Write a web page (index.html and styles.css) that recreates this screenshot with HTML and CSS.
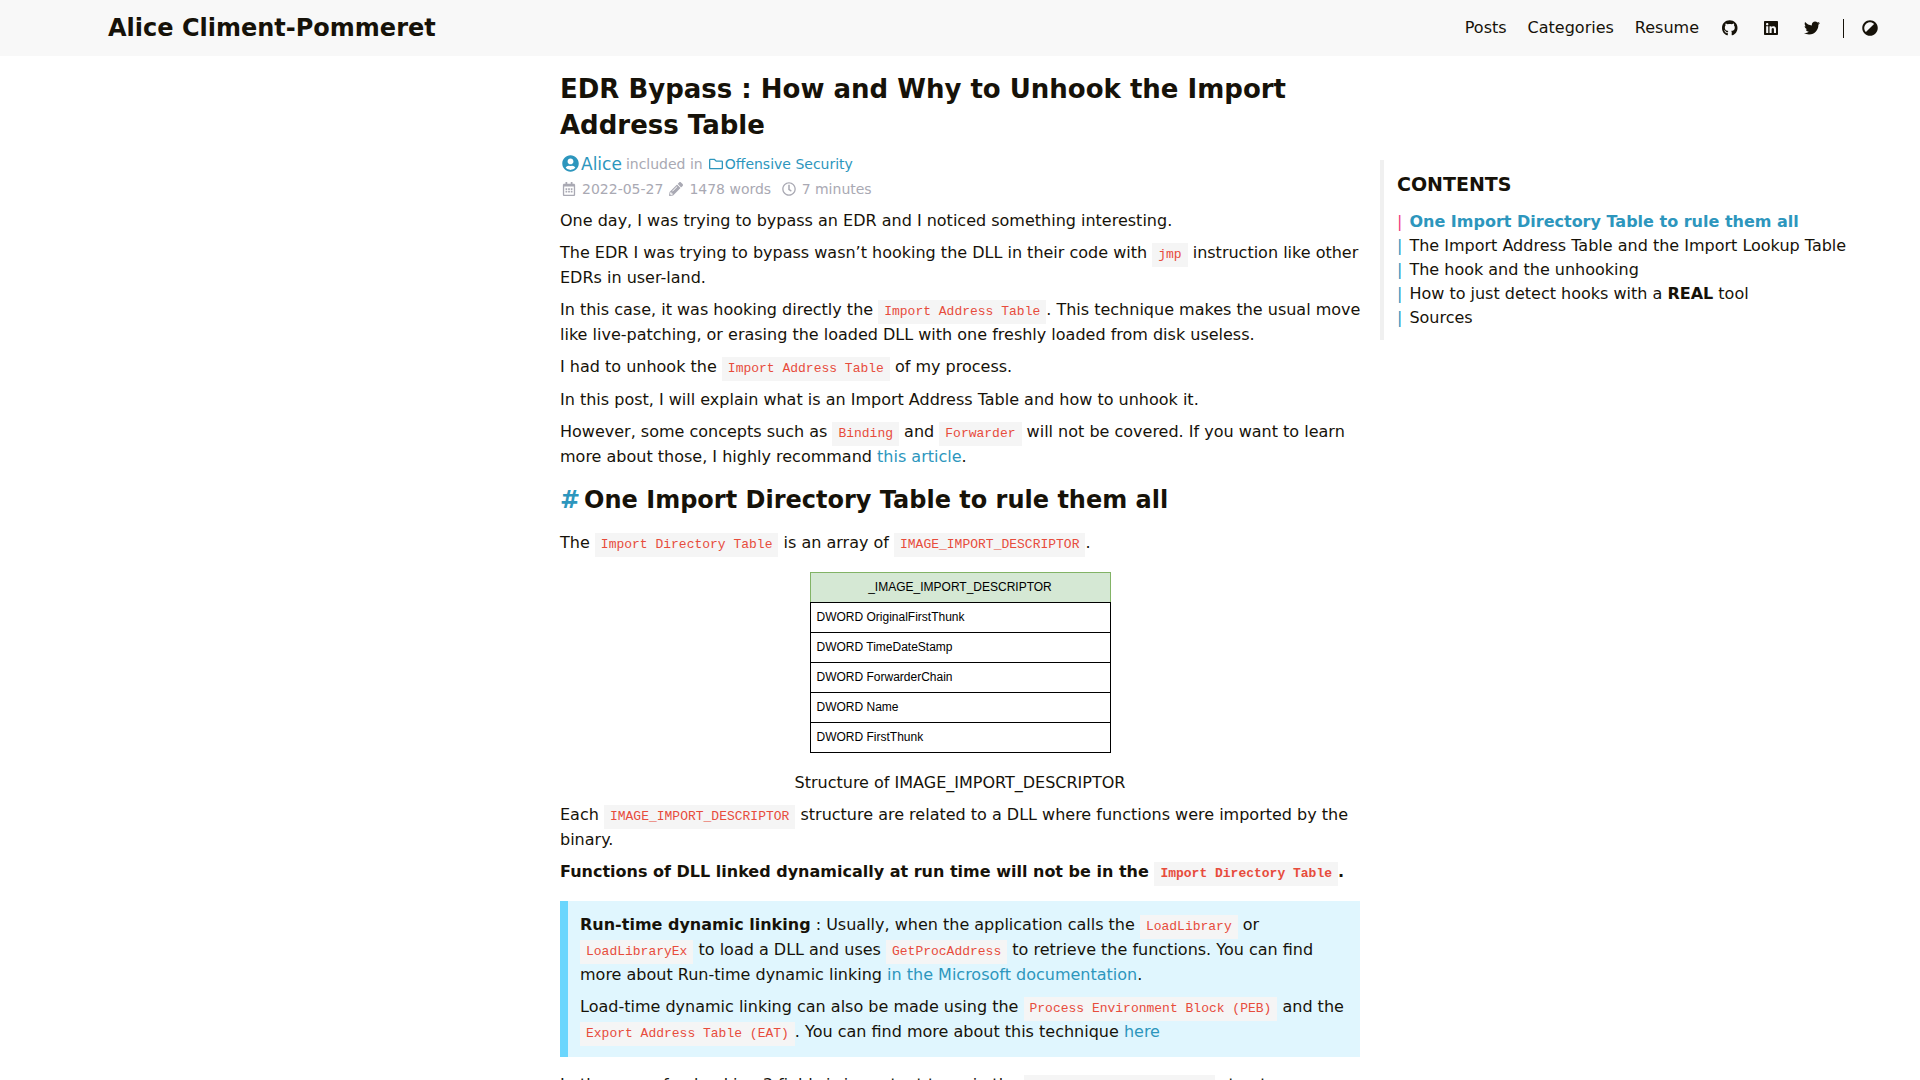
FILE: index.html
```html
<!DOCTYPE html>
<html lang="en">
<head>
<meta charset="utf-8">
<meta name="viewport" content="width=device-width, initial-scale=1">
<title>EDR Bypass : How and Why to Unhook the Import Address Table</title>
<link rel="stylesheet" href="styles.css">
</head>
<body>
<header class="site-header">
  <a class="site-title" href="#">Alice Climent-Pommeret</a>
  <nav class="menu">
    <a href="#">Posts</a>
    <a href="#">Categories</a>
    <a href="#">Resume</a>
    <a class="menu-icon" href="#" aria-label="GitHub"><svg class="icon" viewBox="0 0 496 512"><path d="M165.9 397.4c0 2-2.3 3.6-5.2 3.6-3.3.3-5.6-1.3-5.6-3.6 0-2 2.3-3.6 5.2-3.6 3-.3 5.6 1.3 5.6 3.6zm-31.1-4.5c-.7 2 1.3 4.3 4.3 4.9 2.6 1 5.6 0 6.2-2s-1.3-4.3-4.3-5.2c-2.6-.7-5.5.3-6.2 2.3zm44.2-1.7c-2.9.7-4.9 2.6-4.6 4.9.3 2 2.9 3.3 5.9 2.6 2.9-.7 4.9-2.6 4.6-4.6-.3-1.9-3-3.2-5.9-2.9zM244.8 8C106.1 8 0 113.3 0 252c0 110.9 69.8 205.8 169.5 239.2 12.8 2.3 17.3-5.6 17.3-12.1 0-6.2-.3-40.4-.3-61.4 0 0-70 15-84.7-29.8 0 0-11.4-29.1-27.8-36.6 0 0-22.9-15.7 1.6-15.4 0 0 24.9 2 38.6 25.8 21.9 38.6 58.6 27.5 72.9 20.9 2.3-16 8.8-27.1 16-33.7-55.9-6.2-112.3-14.3-112.3-110.5 0-27.5 7.6-41.3 23.6-58.9-2.6-6.5-11.1-33.3 2.6-67.9 20.9-6.5 69 27 69 27 20-5.6 41.5-8.5 62.8-8.5s42.8 2.9 62.8 8.5c0 0 48.1-33.6 69-27 13.7 34.7 5.2 61.4 2.6 67.9 16 17.7 25.8 31.5 25.8 58.9 0 96.5-58.9 104.2-114.8 110.5 9.2 7.9 17 22.9 17 46.4 0 33.7-.3 75.4-.3 83.6 0 6.5 4.6 14.4 17.3 12.1C428.2 457.8 496 362.9 496 252 496 113.3 383.5 8 244.8 8z"/></svg></a>
    <a class="menu-icon" href="#" aria-label="LinkedIn"><svg class="icon" viewBox="0 0 448 512"><path d="M416 32H31.9C14.3 32 0 46.5 0 64.3v383.4C0 465.5 14.3 480 31.9 480H416c17.6 0 32-14.5 32-32.3V64.3c0-17.8-14.4-32.3-32-32.3zM135.4 416H69V202.2h66.5V416zm-33.2-243c-21.3 0-38.5-17.3-38.5-38.5S80.9 96 102.2 96c21.2 0 38.5 17.3 38.5 38.5 0 21.3-17.2 38.5-38.5 38.5zm282.1 243h-66.4V312c0-24.8-.5-56.7-34.5-56.7-34.6 0-39.9 27-39.9 54.9V416h-66.4V202.2h63.7v29.2h.9c8.9-16.8 30.6-34.5 62.9-34.5 67.2 0 79.7 44.3 79.7 101.9V416z"/></svg></a>
    <a class="menu-icon" href="#" aria-label="Twitter"><svg class="icon" viewBox="0 0 512 512"><path d="M459.37 151.716c.325 4.548.325 9.097.325 13.645 0 138.72-105.583 298.558-298.558 298.558-59.452 0-114.68-17.219-161.137-47.106 8.447.974 16.568 1.299 25.34 1.299 49.055 0 94.213-16.568 130.274-44.832-46.132-.975-84.792-31.188-98.112-72.772 6.498.974 12.995 1.624 19.818 1.624 9.421 0 18.843-1.3 27.614-3.573-48.081-9.747-84.143-51.98-84.143-102.985v-1.299c13.969 7.797 30.214 12.67 47.431 13.319-28.264-18.843-46.781-51.005-46.781-87.391 0-19.492 5.197-37.36 14.294-52.954 51.655 63.675 129.3 105.258 216.365 109.807-1.624-7.797-2.599-15.918-2.599-24.04 0-57.828 46.782-104.934 104.934-104.934 30.213 0 57.502 12.67 76.67 33.137 23.715-4.548 46.456-13.32 66.599-25.34-7.798 24.366-24.366 44.833-46.132 57.827 21.117-2.273 41.584-8.122 60.426-16.243-14.292 20.791-32.161 39.308-52.628 54.253z"/></svg></a>
    <button class="theme-switch" type="button" aria-label="Switch theme"><svg class="icon" viewBox="0 0 512 512"><path transform="rotate(225 256 256)" d="M8 256c0 136.966 111.033 248 248 248s248-111.034 248-248S392.966 8 256 8 8 119.033 8 256zm248 184V72c101.705 0 184 82.311 184 184 0 101.69-82.311 184-184 184z"/></svg></button>
  </nav>
</header>

<div class="layout">
  <main class="post">
    <h1>EDR Bypass : How and Why to Unhook the Import Address Table</h1>
    <div class="meta">
      <div class="meta-line">
        <a class="author" href="#"><svg class="icon" viewBox="0 0 496 512"><path d="M248 8C111 8 0 119 0 256s111 248 248 248 248-111 248-248S385 8 248 8zm0 96c48.6 0 88 39.4 88 88s-39.4 88-88 88-88-39.4-88-88 39.4-88 88-88zm0 344c-58.7 0-111.3-26.6-146.5-68.2 18.8-35.4 55.6-59.8 98.5-59.8 2.4 0 4.8.4 7.1 1.1 13 4.2 26.6 6.9 40.9 6.9 14.3 0 28-2.7 40.9-6.9 2.3-.7 4.7-1.1 7.1-1.1 42.9 0 79.7 24.4 98.5 59.8C359.3 421.4 306.7 448 248 448z"/></svg>Alice</a>
        <span>included in</span>
        <a class="category" href="#"><svg class="icon" viewBox="0 0 512 512"><path d="M464 128H272l-54.63-54.63c-6-6-14.14-9.37-22.63-9.37H48C21.49 64 0 85.49 0 112v288c0 26.51 21.49 48 48 48h416c26.51 0 48-21.49 48-48V176c0-26.51-21.49-48-48-48zm0 272H48V112h140.12l54.63 54.63c6 6 14.14 9.37 22.63 9.37H464v224z"/></svg>Offensive Security</a>
      </div>
      <div class="meta-line">
        <span class="stat"><svg class="icon" viewBox="0 0 448 512"><path d="M148 288h-40c-6.6 0-12-5.4-12-12v-40c0-6.6 5.4-12 12-12h40c6.6 0 12 5.4 12 12v40c0 6.6-5.4 12-12 12zm108-12v-40c0-6.6-5.4-12-12-12h-40c-6.6 0-12 5.4-12 12v40c0 6.6 5.4 12 12 12h40c6.6 0 12-5.4 12-12zm96 0v-40c0-6.6-5.4-12-12-12h-40c-6.6 0-12 5.4-12 12v40c0 6.6 5.4 12 12 12h40c6.6 0 12-5.4 12-12zm-96 96v-40c0-6.6-5.4-12-12-12h-40c-6.6 0-12 5.4-12 12v40c0 6.6 5.4 12 12 12h40c6.6 0 12-5.4 12-12zm-96 0v-40c0-6.6-5.4-12-12-12h-40c-6.6 0-12 5.4-12 12v40c0 6.6 5.4 12 12 12h40c6.6 0 12-5.4 12-12zm192 0v-40c0-6.6-5.4-12-12-12h-40c-6.6 0-12 5.4-12 12v40c0 6.6 5.4 12 12 12h40c6.6 0 12-5.4 12-12zm96-260v352c0 26.5-21.5 48-48 48H48c-26.5 0-48-21.5-48-48V112c0-26.5 21.5-48 48-48h48V12c0-6.6 5.4-12 12-12h40c6.6 0 12 5.4 12 12v52h128V12c0-6.6 5.4-12 12-12h40c6.6 0 12 5.4 12 12v52h48c26.5 0 48 21.5 48 48zm-48 346V160H48v298c0 3.3 2.7 6 6 6h340c3.3 0 6-2.7 6-6z"/></svg><time datetime="2022-05-27">2022-05-27</time></span>
        <span class="stat"><svg class="icon" viewBox="0 0 512 512"><path d="M497.9 142.1l-46.1 46.1c-4.7 4.7-12.3 4.7-17 0l-111-111c-4.7-4.7-4.7-12.3 0-17l46.1-46.1c18.7-18.7 49.1-18.7 67.9 0l60.1 60.1c18.8 18.7 18.8 49.1 0 67.9zM284.2 99.8L21.6 362.4.4 483.9c-2.9 16.4 11.4 30.6 27.8 27.8l121.5-21.3 262.6-262.6c4.7-4.7 4.7-12.3 0-17l-111-111c-4.8-4.7-12.4-4.7-17.1 0zM124.1 339.9c-5.5-5.5-5.5-14.3 0-19.8l154-154c5.5-5.5 14.3-5.5 19.8 0s5.5 14.3 0 19.8l-154 154c-5.5 5.5-14.3 5.5-19.8 0zM88 424h48v36.3l-64.5 11.3-31.1-31.1L51.7 376H88v48z"/></svg>1478 words</span>
        <span class="stat">&nbsp;<svg class="icon" viewBox="0 0 512 512"><path d="M256 8C119 8 8 119 8 256s111 248 248 248 248-111 248-248S393 8 256 8zm0 448c-110.5 0-200-89.5-200-200S145.5 56 256 56s200 89.5 200 200-89.5 200-200 200zm61.8-104.4l-84.9-61.7c-3.1-2.3-4.9-5.9-4.9-9.7V116c0-6.6 5.4-12 12-12h32c6.6 0 12 5.4 12 12v141.7l66.8 48.6c5.4 3.9 6.5 11.4 2.6 16.8L334.6 349c-3.9 5.3-11.4 6.5-16.8 2.6z"/></svg>7 minutes</span>
      </div>
    </div>

    <p>One day, I was trying to bypass an EDR and I noticed something interesting.</p>
    <p>The EDR I was trying to bypass wasn’t hooking the DLL in their code with <code>jmp</code> instruction like other EDRs in user-land.</p>
    <p><span class="keep-line">In this case, it was hooking directly the <code>Import Address Table</code>. This technique makes the usual move</span> like live-patching, or erasing the loaded DLL with one freshly loaded from disk useless.</p>
    <p>I had to unhook the <code>Import Address Table</code> of my process.</p>
    <p>In this post, I will explain what is an Import Address Table and how to unhook it.</p>
    <p>However, some concepts such as <code>Binding</code> and <code>Forwarder</code> will not be covered. If you want to learn more about those, I highly recommand <a href="#">this article</a>.</p>

    <h2 id="one-import-directory-table"><a href="#one-import-directory-table">#</a>One Import Directory Table to rule them all</h2>
    <p>The <code>Import Directory Table</code> is an array of <code>IMAGE_IMPORT_DESCRIPTOR</code>.</p>

    <figure>
      <table class="struct">
        <thead><tr><th>_IMAGE_IMPORT_DESCRIPTOR</th></tr></thead>
        <tbody>
          <tr><td>DWORD OriginalFirstThunk</td></tr>
          <tr><td>DWORD TimeDateStamp</td></tr>
          <tr><td>DWORD ForwarderChain</td></tr>
          <tr><td>DWORD Name</td></tr>
          <tr><td>DWORD FirstThunk</td></tr>
        </tbody>
      </table>
      <figcaption>Structure of IMAGE_IMPORT_DESCRIPTOR</figcaption>
    </figure>

    <p>Each <code>IMAGE_IMPORT_DESCRIPTOR</code> structure are related to a DLL where functions were imported by the binary.</p>
    <p><strong>Functions of DLL linked dynamically at run time will not be in the <code>Import Directory Table</code>.</strong></p>

    <blockquote>
      <p><strong>Run-time dynamic linking</strong> : Usually, when the application calls the <code>LoadLibrary</code> or <code>LoadLibraryEx</code> to load a DLL and uses <code>GetProcAddress</code> to retrieve the functions. You can find more about Run-time dynamic linking <a href="#">in the Microsoft documentation</a>.</p>
      <p>Load-time dynamic linking can also be made using the <code>Process Environment Block (PEB)</code> and the <code>Export Address Table (EAT)</code>. You can find more about this technique <a href="#">here</a></p>
    </blockquote>

    <p>In the case of unhooking 3 fields is important to us in the <code>IMAGE_IMPORT_DESCRIPTOR</code> structure:</p>
  </main>

  <aside class="toc">
    <h2>CONTENTS</h2>
    <ul>
      <li class="active"><a href="#">One Import Directory Table to rule them all</a></li>
      <li><a href="#">The Import Address Table and the Import Lookup Table</a></li>
      <li><a href="#">The hook and the unhooking</a></li>
      <li><a href="#">How to just detect hooks with a <strong>REAL</strong> tool</a></li>
      <li><a href="#">Sources</a></li>
    </ul>
  </aside>
</div>
</body>
</html>
```
FILE: styles.css
```css
* { box-sizing: border-box; }

html, body { height: 100%; }

body {
  margin: 0;
  overflow: hidden;
  display: flex;
  flex-direction: column;
  font: 16px/24px "DejaVu Sans", sans-serif;
  color: #161209;
  background: #fff;
}

a { color: #2d96bd; text-decoration: none; }

.icon { display: block; height: 1em; fill: currentColor; }

/* Header */
.site-header {
  flex: none;
  display: flex;
  align-items: center;
  justify-content: space-between;
  height: 56px;
  padding: 0 40px 0 108px;
  background: #f8f8f8;
}
.site-header a { color: inherit; }
.site-title { font-size: 24px; font-weight: bold; }
.menu { display: flex; align-items: center; gap: 21px; }
.menu-icon { display: flex; justify-content: center; width: 20px; }
.theme-switch {
  display: flex;
  align-items: center;
  height: 19px;
  padding: 0 2px 0 18px;
  border: 0;
  border-left: 1px solid #161209;
  background: none;
  color: inherit;
  font-size: 16px;
}

/* Page columns: the article stays centred, the contents fill the right side */
.layout {
  flex: 1;
  min-height: 0;
  display: grid;
  grid-template-columns: 1fr minmax(0, 800px) 1fr;
  align-items: start;
}
.post { grid-column: 2; padding-top: 15px; }

h1 { margin: 0 0 8px; font-size: 26px; line-height: 36px; }

/* Article details */
.meta { margin-bottom: 8px; font-size: 14px; line-height: 24px; color: #a9a9b3; }
.meta-line { display: flex; align-items: center; gap: 4px; height: 25px; }
.meta a, .stat { display: flex; align-items: center; }
.meta .icon { width: 18px; }
.author { font-size: 17px; }
.meta .author .icon { width: 21px; }
.stat .icon { margin-right: 4px; }

/* Article text */
p { margin: 8px 0; }

code {
  display: inline-block;
  margin-bottom: -1px;
  padding: 0 6px;
  font: 13px/24px "Liberation Mono", monospace;
  font-weight: inherit;
  color: #e74c3c;
  background: #f5f5f5;
}

.keep-line { white-space: nowrap; }

.post h2 { margin: 16px 0; font-size: 24px; line-height: 30px; }
.post h2 a { margin-right: 4px; }

figure { margin: 16px 0 8px; text-align: center; }
.struct {
  width: 301px;
  margin: 0 auto 18px;
  border-collapse: collapse;
  font: 12px/29px "Liberation Sans", sans-serif;
  color: #000;
}
.struct th, .struct td { height: 30px; padding: 0 6px; border: 1px solid #000; text-align: left; }
.struct th { border-color: #82b366 #82b366 #000; background: #d5e8d4; font-weight: normal; text-align: center; }

blockquote {
  margin: 16px 0;
  padding: 12px;
  border-left: 8px solid #6bd6fd;
  background: #e0f6fe;
}
blockquote p { margin: 0; }
blockquote p + p { margin-top: 8px; }

/* Table of contents */
.toc {
  grid-column: 3;
  margin: 104px 0 0 20px;
  padding: 8px 13px 10px;
  border-left: 4px solid #f0f0f0;
}
.toc h2 { margin: 0; font-size: 19px; line-height: 32px; }
.toc ul { margin: 10px 0 0; padding: 0; list-style: none; }
.toc li::before { content: "|"; margin-right: 7px; color: #2d96bd; }
.toc li a { color: inherit; }
.toc .active::before { color: #ef3982; }
.toc .active a { font-weight: bold; color: #2d96bd; }
```
